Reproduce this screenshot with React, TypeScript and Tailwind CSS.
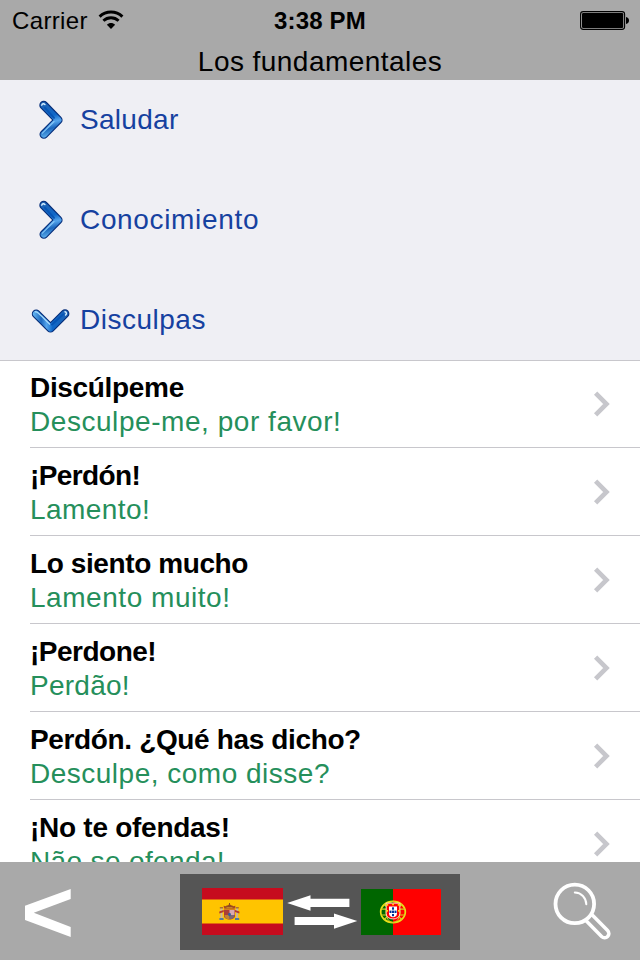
import React from "react";

const sections = [
  { title: "Saludar", spacing: "tracking-[0.3px]", open: false },
  { title: "Conocimiento", spacing: "tracking-[0.66px]", open: false },
  { title: "Disculpas", spacing: "tracking-[0.5px]", open: true },
];

const phrases = [
  { es: "Discúlpeme", pt: "Desculpe-me, por favor!", esSpacing: "tracking-[-0.33px]", ptSpacing: "tracking-[0.55px]" },
  { es: "¡Perdón!", pt: "Lamento!", esSpacing: "tracking-[-0.62px]", ptSpacing: "tracking-[0.42px]" },
  { es: "Lo siento mucho", pt: "Lamento muito!", esSpacing: "tracking-[-0.4px]", ptSpacing: "tracking-[0.54px]" },
  { es: "¡Perdone!", pt: "Perdão!", esSpacing: "tracking-[-0.5px]", ptSpacing: "tracking-[0.25px]" },
  { es: "Perdón. ¿Qué has dicho?", pt: "Desculpe, como disse?", esSpacing: "tracking-[-0.36px]", ptSpacing: "tracking-[0.5px]" },
  { es: "¡No te ofendas!", pt: "Não se ofenda!", esSpacing: "tracking-[-0.27px]", ptSpacing: "tracking-[0.36px]" },
];

function WifiIcon() {
  return (
    <svg className="ml-[10px] mt-[10px] h-5 w-[26px]" viewBox="0 0 26 20" fill="none">
      <path d="M1.6 6.6C8 .6 18 .6 24.4 6.6" stroke="#000" strokeWidth="3" />
      <path d="M5.4 10.8C9.7 6.8 16.3 6.8 20.6 10.8" stroke="#000" strokeWidth="2.9" />
      <path d="M8.9 14.8C11.2 12.4 14.8 12.4 17.1 14.8L13 19Z" fill="#000" />
    </svg>
  );
}

function BatteryIcon() {
  return (
    <svg className="mr-[10px] mt-[10px] h-5 w-[50px]" viewBox="0 0 50 20" fill="none">
      <rect x=".6" y="1.6" width="44" height="17.8" rx="2.6" stroke="#000" strokeWidth="1.1" />
      <rect x="2" y="3" width="41.2" height="15" rx="1.2" fill="#000" />
      <path d="M46 7c2 .6 3 1.8 3 3.5S48 13.4 46 14Z" fill="#000" />
    </svg>
  );
}

function RightMarker() {
  return (
    <svg className="h-10 w-10" viewBox="0 0 40 40" fill="none" strokeLinecap="round" strokeLinejoin="round">
      <defs>
        <linearGradient id="rightBlue" x1="14" y1="3" x2="22" y2="37" gradientUnits="userSpaceOnUse">
          <stop stopColor="#1e63b4" />
          <stop offset=".4" stopColor="#0f67c8" />
          <stop offset=".58" stopColor="#56a5ec" />
          <stop offset=".75" stopColor="#1c67bd" />
          <stop offset="1" stopColor="#65b8f4" />
        </linearGradient>
      </defs>
      <path d="M13.7 5.2L28.2 20 13.9 34.3" stroke="#052c78" strokeWidth="8.8" />
      <path d="M13.7 5.2L28.2 20 13.9 34.3" stroke="url(#rightBlue)" strokeWidth="6.6" />
      <path d="M11.8 5.2c.4-2 2.3-1.6 3.2-.6" stroke="#d9f0ff" strokeWidth="1.4" />
      <path d="M15 7.8l9 10" stroke="#0755b5" strokeWidth="2" />
      <path d="M12.4 33.2L24 21.5" stroke="#83c6f8" strokeWidth="1.2" />
    </svg>
  );
}

function DownMarker() {
  return (
    <svg className="h-10 w-10" viewBox="0 0 40 40" fill="none" strokeLinecap="round" strokeLinejoin="round">
      <defs>
        <linearGradient id="downBlue" x1="3" y1="14" x2="37" y2="16" gradientUnits="userSpaceOnUse">
          <stop stopColor="#65b8f4" />
          <stop offset=".25" stopColor="#1c67bd" />
          <stop offset=".42" stopColor="#56a5ec" />
          <stop offset=".6" stopColor="#0f67c8" />
          <stop offset="1" stopColor="#1e63b4" />
        </linearGradient>
      </defs>
      <path d="M6.2 13.9L20.5 28.2 35 13.7" stroke="#052c78" strokeWidth="8.8" />
      <path d="M6.2 13.9L20.5 28.2 35 13.7" stroke="url(#downBlue)" strokeWidth="6.6" />
      <path d="M35 11.8c2 .4 1.6 2.3.6 3.2" stroke="#d9f0ff" strokeWidth="1.4" />
      <path d="M22 24.5l11-10" stroke="#0755b5" strokeWidth="2" />
      <path d="M5.3 11.8c1.6-.5 3 1 14.2 12.2" stroke="#a8dcfb" strokeWidth="1.3" />
    </svg>
  );
}

function Disclosure() {
  return (
    <svg className="mt-px mr-[29px] h-[26px] w-[18px]" viewBox="0 0 18 26" fill="none">
      <path d="M2.6 2.1L13.5 13 2.6 23.9" stroke="#c7c7cc" strokeWidth="4.6" />
    </svg>
  );
}

function SpainFlag() {
  return (
    <svg className="h-[47px] w-[81px]" viewBox="0 0 81 47">
      <rect width="81" height="47" fill="#c60b1e" />
      <rect y="11.5" width="81" height="24" fill="#ffc400" />
      <g>
        <rect x="18.4" y="20" width="2.2" height="10.5" fill="#c9b59a" />
        <rect x="34" y="20" width="2.2" height="10.5" fill="#c9b59a" />
        <path d="M17.3 23.5l4.4-1.4v2l-4.4 1.4zM33 22.1l4.4 1.4v2L33 24.1z" fill="#b5392c" />
        <path d="M17.4 31h4.2M33 31h4.2" stroke="#55799b" strokeWidth="1.8" />
        <path d="M17.8 19.7h3.3M33.5 19.7h3.3" stroke="#ad702b" strokeWidth="1.5" />
        <path d="M22 21.5h11v6.2c0 5-11 5-11 0z" fill="#aa3e38" />
        <path d="M27.5 22h5v5h-5z" fill="#d8a9b1" />
        <path d="M22.5 27h5v4.3c-3.1 0-5-1.2-5-4.3z" fill="#bf8433" />
        <path d="M27.5 27h5c0 3-2 4.3-5 4.3z" fill="#7c6875" />
        <ellipse cx="27.5" cy="26.5" rx="1.4" ry="1.8" fill="#355d9c" />
        <path d="M22.3 20.8l-.8-3 3 .5 3-2.3 3 2.3 3-.5-.8 3z" fill="#a94b22" />
        <path d="M24 18.2h7M27.5 15v5" stroke="#8c4e1c" strokeWidth="1" />
        <path d="M24.5 19.7h6" stroke="#d5a12b" strokeWidth=".8" />
      </g>
    </svg>
  );
}

function PortugalFlag() {
  return (
    <svg className="h-[46px] w-[80px]" viewBox="0 0 80 46">
      <rect width="80" height="46" fill="#f00" />
      <rect width="32" height="46" fill="#060" />
      <ellipse cx="32" cy="23" rx="12.3" ry="10.6" fill="none" stroke="#e8df18" strokeWidth="1.7" />
      <ellipse cx="32" cy="23" rx="7" ry="10.7" fill="none" stroke="#d6cf20" strokeWidth="1" />
      <path d="M20 20.2h24M20 26h24M23 15.5l18 15M23 30.5l18-15" stroke="#d6cf20" strokeWidth="1.2" />
      <path d="M25.2 14.2h13.6v10.5c0 7-13.6 7-13.6 0z" fill="#f00" stroke="#fff" strokeWidth=".8" />
      <path d="M28 17.4h8v7.4c0 4.5-8 4.5-8 0z" fill="#fff" />
      <g fill="#003399">
        <rect x="31" y="18.3" width="2" height="2.4" />
        <rect x="28.5" y="21.6" width="2" height="2.4" />
        <rect x="31" y="21.6" width="2" height="2.4" />
        <rect x="33.5" y="21.6" width="2" height="2.4" />
        <rect x="31" y="25" width="2" height="2.2" />
      </g>
      <g fill="#ffe900">
        <rect x="25.5" y="15" width="1.7" height="1.7" />
        <rect x="31.2" y="14.8" width="1.7" height="1.5" />
        <rect x="36.8" y="15" width="1.7" height="1.7" />
        <rect x="25.5" y="21" width="1.5" height="1.7" />
        <rect x="37" y="21" width="1.5" height="1.7" />
      </g>
    </svg>
  );
}

function SwapArrows() {
  return (
    <svg className="h-[36px] w-[72px]" viewBox="0 0 72 36" fill="#fff">
      <path d="M.2 9L23.5 1.2V4.7H62.4v8.2H23.5v3.9Z" />
      <path d="M70.3 27L47 19.4V23H7.6v8.1H47v3.7Z" />
    </svg>
  );
}

export default function App() {
  return (
    <div className="flex h-[960px] w-[640px] flex-col overflow-hidden bg-white font-['Liberation_Sans',Arial,sans-serif] text-black">
      <header className="h-20 shrink-0 bg-[#a9a9a9]">
        <div className="grid h-10 grid-cols-3">
          <div className="flex pl-3">
            <span className="pt-[5px] text-2xl leading-8 tracking-[0.35px]">Carrier</span>
            <WifiIcon />
          </div>
          <span className="pt-[5px] text-center text-2xl leading-8 font-bold tracking-[0.15px]">3:38 PM</span>
          <div className="flex justify-end">
            <BatteryIcon />
          </div>
        </div>
        <h1 className="pt-[5px] text-center text-[28px] leading-[34px] tracking-[0.45px]">Los fundamentales</h1>
      </header>

      <nav className="flex h-[280px] shrink-0 flex-col gap-5 bg-[#efeff4]">
        {sections.map((s) => (
          <button key={s.title} className="flex h-20 items-center pl-[30px] text-left text-[28px] leading-[34px] text-[#1641a0]">
            {s.open ? <DownMarker /> : <RightMarker />}
            <span className={"ml-[10px] " + s.spacing}>{s.title}</span>
          </button>
        ))}
      </nav>

      <main className="min-h-0 flex-1 overflow-hidden bg-white">
        <div className="h-px bg-[#c8c7cc]" />
        <ul className="-mt-px">
          {phrases.map((p) => (
            <li key={p.es} className="ml-[30px] flex h-[88px] items-center justify-between border-b border-[#c8c7cc]">
              <div className="pt-[2px] text-[28px] leading-[34px] whitespace-nowrap">
                <p className={"font-bold " + p.esSpacing}>{p.es}</p>
                <p className={"text-[#258f5b] " + p.ptSpacing}>{p.pt}</p>
              </div>
              <Disclosure />
            </li>
          ))}
        </ul>
      </main>

      <footer className="flex h-[98px] shrink-0 items-start justify-between bg-[#a9a9a9] pt-3">
        <button className="w-[180px] pt-[14px] pl-[24px]" aria-label="Atrás">
          <svg className="h-[50px] w-[48px]" viewBox="0 0 48 50" fill="#fff">
            <path d="M1 17.8L46.7 1v10L9.8 24.7 46.7 39v10L1 32Z" />
          </svg>
        </button>
        <button className="flex h-[76px] w-[280px] bg-[#555] pl-[22px]" aria-label="Cambiar idioma">
          <div className="pt-[14px]"><SpainFlag /></div>
          <div className="ml-[4px] pt-5"><SwapArrows /></div>
          <div className="ml-[2px] pt-[15px]"><PortugalFlag /></div>
        </button>
        <button className="flex w-[180px] justify-end pt-[6px] pr-[28px]" aria-label="Buscar">
          <svg className="h-[62px] w-[60px]" viewBox="0 0 60 62" fill="none" stroke="#fff">
            <circle cx="22.8" cy="23.9" r="19.3" strokeWidth="3.8" />
            <path d="M22.8 12.5c6.5.2 11.3 5 11.5 11.8" strokeWidth="2" strokeLinecap="round" />
            <path d="M39.8 34.5L55.6 50.4c4 4-2 10-6 6L33.9 40.5" strokeWidth="3.5" />
          </svg>
        </button>
      </footer>
    </div>
  );
}
